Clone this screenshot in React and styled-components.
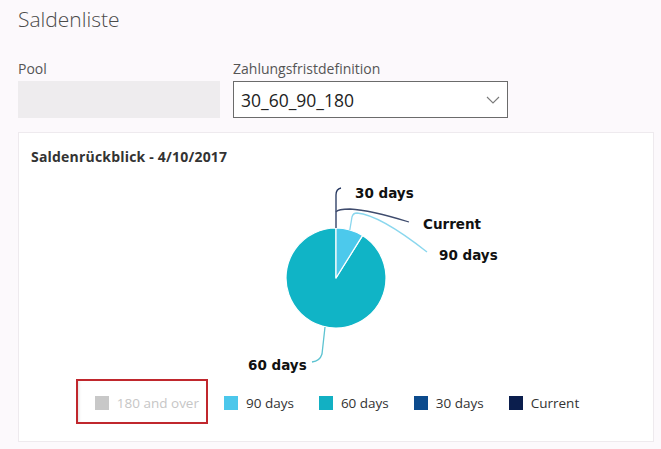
import React from "react";
import styled, { createGlobalStyle } from "styled-components";

const GlobalStyle = createGlobalStyle`
  html, body { margin: 0; padding: 0; background: #fcf9fc; }
  body { font-family: "Open Sans", "Noto Sans", sans-serif; }
  * { box-sizing: border-box; }
`;

const Page = styled.div`
  padding: 5px 7px 0 18px;
  width: 661px;
  height: 449px;
  overflow: hidden;
`;

const Title = styled.h1`
  margin: 0;
  font-size: 21px;
  font-weight: 300;
  line-height: 28px;
  color: #4a4a4a;
`;

const FormRow = styled.div`
  display: flex;
  gap: 13px;
  margin-top: 27px;
`;

const Field = styled.div`
  display: flex;
  flex-direction: column;
  gap: 3px;
  width: ${(p) => p.$width}px;
`;

const Label = styled.label`
  font-size: 14px;
  line-height: 18px;
  color: #555;
`;

const ReadOnlyBox = styled.div`
  height: 37px;
  background: #eeecee;
`;

const Select = styled.div`
  height: 37px;
  border: 1px solid #6b6b6b;
  background: #fff;
  display: flex;
  align-items: center;
  justify-content: space-between;
  padding: 0 7px 0 7px;
  font-size: 17.5px;
  color: #222;
`;

const Card = styled.section`
  margin-top: 14px;
  width: 636px;
  height: 310px;
  background: #fff;
  border: 1px solid #eeeaee;
  padding: 15px 0 0 0;
`;

const CardTitle = styled.h2`
  margin: 0 0 0 12px;
  font-size: 14px;
  font-weight: 700;
  letter-spacing: 0.2px;
  line-height: 18px;
  color: #333;
`;

const ChartSvg = styled.svg`
  display: block;
  margin-top: 4px;
`;

const Legend = styled.div`
  display: flex;
  justify-content: center;
  gap: 25px;
  margin-top: 19px;
  padding-left: 2px;
`;

const LegendItem = styled.div`
  position: relative;
  display: flex;
  align-items: center;
  gap: 8px;
  font-size: 13.5px;
  line-height: 18px;
  color: ${(p) => (p.$muted ? "#c6c6c6" : "#333")};

  &::after {
    content: "";
    display: ${(p) => (p.$highlight ? "block" : "none")};
    position: absolute;
    top: -15px;
    left: -19px;
    right: -9px;
    bottom: -12px;
    border: 2px solid #c0272d;
    box-shadow: inset 3px 0 3px -2px rgba(0, 0, 0, 0.12);
    pointer-events: none;
  }
`;

const Swatch = styled.span`
  width: 14px;
  height: 14px;
  background: ${(p) => p.$color};
`;

const legend = [
  { label: "180 and over", color: "#c8c8c8", muted: true, highlight: true },
  { label: "90 days", color: "#4cc7eb" },
  { label: "60 days", color: "#12b0c3" },
  { label: "30 days", color: "#0c4b8d" },
  { label: "Current", color: "#0b1e4d" },
];

const labelStyle = {
  fontFamily: '"DejaVu Sans", Verdana, sans-serif',
  fontWeight: 700,
  fontSize: "13.5px",
  fill: "#111",
};

function PieChart() {
  return (
    <ChartSvg width="634" height="205" viewBox="0 0 634 205">
      <path
        d="M317,108 L343.5,65.6 A50,50 0 1 1 317,58 Z"
        fill="#10b4c6"
        stroke="#ffffff"
        strokeWidth="1.2"
        strokeLinejoin="round"
      />
      <path
        d="M317,108 L317,58 A50,50 0 0 1 343.5,65.6 Z"
        fill="#4cc9ec"
        stroke="#ffffff"
        strokeWidth="1.2"
        strokeLinejoin="round"
      />
      <path d="M317,58 L317,25 Q317,19 322,18" fill="none" stroke="#23355e" strokeWidth="1.3" />
      <path d="M317,42 Q319,39 331,39 Q351,40 390,52" fill="none" stroke="#3e4b6d" strokeWidth="1.3" />
      <path d="M330.8,60 L333,47 Q334,43 338,43 Q361,45 408,82" fill="none" stroke="#8ad7ee" strokeWidth="1.3" />
      <path d="M306,157 L303,184 Q301,191 293,192" fill="none" stroke="#5cc3d1" strokeWidth="1.3" />
      <text x="336" y="28" style={labelStyle}>30 days</text>
      <text x="404" y="59" style={labelStyle}>Current</text>
      <text x="420" y="90" style={labelStyle}>90 days</text>
      <text x="229" y="200" style={labelStyle}>60 days</text>
    </ChartSvg>
  );
}

function Chevron() {
  return (
    <svg width="14" height="8" viewBox="0 0 14 8">
      <polyline points="1,1 7,7 13,1" fill="none" stroke="#7a7a7a" strokeWidth="1.1" />
    </svg>
  );
}

export default function App() {
  return (
    <>
      <GlobalStyle />
      <Page>
        <Title>Saldenliste</Title>
        <FormRow>
          <Field $width={202}>
            <Label>Pool</Label>
            <ReadOnlyBox />
          </Field>
          <Field $width={275}>
            <Label>Zahlungsfristdefinition</Label>
            <Select>
              <span>30_60_90_180</span>
              <Chevron />
            </Select>
          </Field>
        </FormRow>
        <Card>
          <CardTitle>Saldenrückblick - 4/10/2017</CardTitle>
          <PieChart />
          <Legend>
            {legend.map((item) => (
              <LegendItem key={item.label} $muted={item.muted} $highlight={item.highlight}>
                <Swatch $color={item.color} />
                {item.label}
              </LegendItem>
            ))}
          </Legend>
        </Card>
      </Page>
    </>
  );
}
